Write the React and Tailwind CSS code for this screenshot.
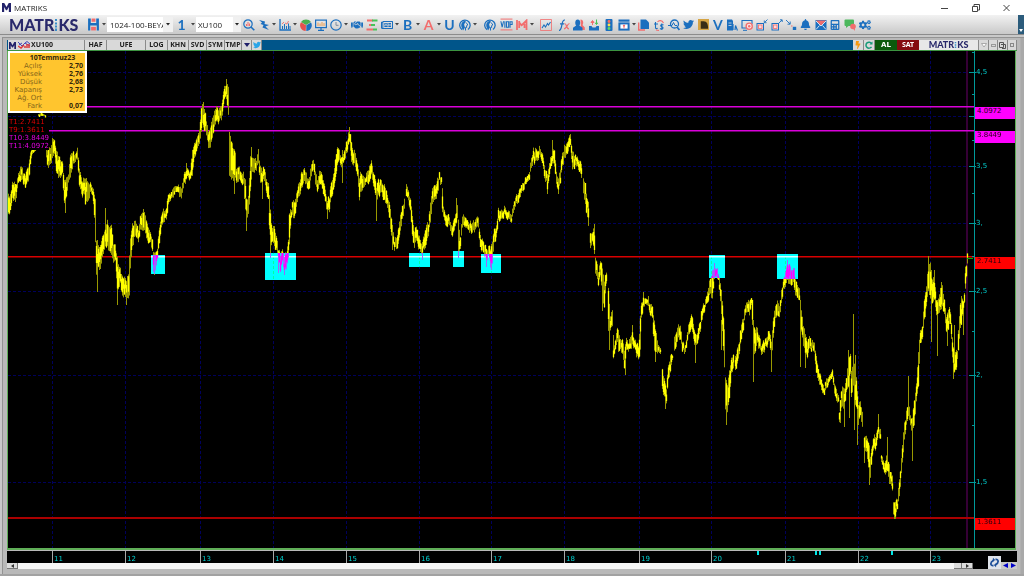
import React from "react";
import {
  FaHandshake, FaTwitter, FaBell, FaCalculator, FaRegNewspaper, FaUser, FaCogs, FaBolt,
} from "react-icons/fa";

const BLUE = "#1b6fbf";
const RED = "#f26d6d";

/* ---------- price data: x, high, low ---------- */
const SEGMENTS = [
  [38, 114, 116, 41, 113, 116, 45, 115, 116],
  [8,196,216,10,194,210,12,184,200,13,182,200,15,186,204,17,178,188,19,170,180,20,165,180,22,168,180,24,174,185,26,172,186,28,168,182,29,160,176,30,152,164,32,149,154,35,148,151],
  [46,148,158,48,148,168,50,150,166,52,140,160,54,138,152,56,150,172,58,155,177,60,160,178,62,160,172,64,182,205,66,178,198,68,172,180,70,155,178,72,152,168,74,154,162,76,150,158,77,148,160,79,170,188,82,180,196,84,180,196,85,178,204,88,184,202,90,180,190,92,188,196,94,193,216,95,197,240,96,240,274,97,253,272,98,246,268,100,244,268,102,235,256,104,230,248,105,224,245,107,220,246,109,226,250,111,226,256,113,244,262,115,246,262,117,256,290,118,265,290,120,270,285,122,274,294,124,278,296,126,280,300,128,276,300,129,255,295,130,240,270,132,225,248,134,222,238,136,222,236,138,228,240,140,218,232,142,214,232,144,212,230,146,220,238,148,228,244,150,230,240,152,240,252,153,250,270,155,254,272,157,248,258,159,228,244,161,214,226,163,208,222,165,212,220,167,200,215,168,196,206,171,192,198,173,186,196,175,186,192,177,186,192,179,186,196,181,188,198,183,176,186,185,170,182,187,168,176,190,172,180,192,150,176,194,145,160,197,138,150,199,128,142,201,110,134,202,106,125,204,108,130,206,120,134,208,132,148,210,130,150,212,118,138,214,112,128,216,107,122,218,108,122,220,108,120,222,100,116,223,90,106,225,84,95,226,82,98,228,86,114],
  [229,132,176,231,140,178,233,148,180,235,155,180,236,168,182,238,165,180,240,172,182,243,174,186,245,180,210,246,200,218,248,196,214,250,155,190,252,160,174,254,158,172,256,160,170,258,152,164,260,165,182,262,170,183,264,168,180,266,178,192,268,184,200,269,196,230,271,222,244,272,226,240,274,225,245,276,238,252,278,248,258,280,254,270,282,250,262,284,255,272,286,252,268,288,242,260,289,215,246,291,208,216,293,200,218,295,200,215,297,188,200,299,182,196,301,174,190,303,168,182,305,170,182,307,176,186,309,178,190,311,164,176,313,158,168,315,172,185,317,180,192,319,170,184,321,172,185,323,180,194,325,192,204,327,200,214,329,196,210,330,184,200,333,176,192,335,160,182,337,148,166,339,150,160,341,158,168,343,155,164,345,147,158,347,140,152,349,129,142,351,140,160,353,152,165,355,152,166,357,165,178,359,176,198,361,172,190,363,174,186,365,178,185,367,172,184,369,164,180,371,162,176,373,172,186,375,180,196,376,186,204,378,180,196,381,182,194,384,184,200,386,192,206,388,198,210,390,208,228,392,224,240,394,240,249,396,238,249,398,228,244,400,216,232,402,205,218,404,200,210],
  [406,184,196,408,190,200,410,198,210,412,216,236,414,232,248,416,226,240,418,236,250,420,240,252,422,244,252,424,232,248,426,226,246,428,222,234,430,205,225,432,188,204,435,186,200,437,180,196,439,174,182,441,177,184],
  [442,186,210,443,208,218,445,215,226,447,214,226,449,218,226,451,226,236,453,222,234,455,214,226,457,205,218,458,220,250,460,236,248,462,215,226,465,218,228,468,224,232,470,222,232,473,222,232,476,220,230,478,218,228,480,236,248,482,240,252,484,244,255,486,250,262,488,246,254,490,248,266,492,240,262,494,230,244,496,224,236,498,210,222,500,210,220,502,212,220,504,208,216,507,210,218,509,212,220,511,214,222,513,204,212,515,196,205,517,195,204,519,188,198,521,184,192,524,180,188,527,176,182,529,172,180,531,156,166,533,150,162,535,150,163,537,150,160,540,147,155,542,154,164,544,165,178,546,172,182,547,174,188,549,162,176,551,155,165,552,150,162,554,152,168,556,170,182,558,180,192,560,168,182,562,155,168,564,145,158,566,145,156,568,140,153,570,135,146,572,152,170,574,155,168,576,156,165,578,160,170,581,162,176],
  [583,179,194,585,184,205,587,200,218,588,202,226],
  [590,235,250,592,233,242,594,226,252],
  [595,256,272,598,270,284,600,260,274,602,268,300,604,280,306,606,274,285],
  [608,290,333,610,318,332,612,310,326],
  [613,350,358,615,342,352,617,328,342,618,328,350,620,340,350,622,340,355,624,350,368,626,340,352,628,344,352,630,338,350,632,330,345,634,340,348,636,342,355,638,345,358,640,318,352,641,305,320,643,298,308,645,298,304,648,300,306,650,302,314,652,306,318,654,320,350,656,335,354,658,345,352,660,348,354],
  [662,368,388,664,380,398,666,388,402,668,366,380,670,357,374,672,355,360],
  [674,336,350,676,330,345,678,322,335,680,328,342,682,340,350,684,348,354,686,342,350,688,325,335,690,318,332,692,315,330,694,330,345,696,335,345,698,330,342,700,320,330,702,306,318,704,304,312,706,296,304,708,286,300,710,280,295,712,272,300,714,268,278,716,270,278,718,274,280,720,282,300,722,300,330,724,330,368,725,378,410,727,385,412,729,370,398,731,360,375,733,352,366],
  [735,354,368,737,350,366,739,340,352,741,325,340,743,318,330,745,305,315,747,302,312,749,300,314,751,298,305,752,300,325],
  [754,328,355,757,330,345,759,335,348,761,345,354,763,340,352,765,340,348,767,335,346,769,330,340,771,342,362,773,320,340,775,306,318,777,300,315,779,305,316,781,292,305,783,280,290,785,270,285,787,264,280,789,266,286,791,270,286,793,268,282,795,278,294,797,285,298,799,290,302],
  [800,303,325,803,325,345,805,335,354,807,340,356,809,338,350,812,342,350,814,345,355,816,355,372,818,368,380,820,375,386,822,385,395,824,388,395,826,380,390,828,376,384,830,374,380,832,370,378,834,382,392,836,388,400,838,395,402],
  [839,410,420,842,385,405,844,390,412,846,378,392,848,358,385,850,355,375,851,370,396,853,360,385,854,366,398,856,378,408,858,405,425,860,402,416,862,410,425],
  [864,436,450,866,436,452,868,440,465,870,455,476,872,444,455,874,436,450,876,435,448,878,426,434,880,428,438],
  [881,455,462,884,465,475,886,455,472,888,460,475,890,470,482,892,475,490,893,500,512,895,500,517,897,500,510,899,478,495,901,460,475,903,430,450,905,418,432,907,408,422,908,398,415,910,415,425,912,420,435,914,400,425,916,382,400,918,350,385,920,332,345,922,325,338,924,300,320,926,285,305,928,264,290,930,262,298,932,282,306,934,275,300,936,300,315,938,300,315,940,290,312,942,287,308,944,300,315,946,315,330,948,310,330,950,310,322,952,335,355,954,355,371,956,350,370,957,350,358],
  [958,330,350,960,305,330,962,298,315,963,302,312],
  [964,292,302],
  [965,266,288,966,264,276],
  [967,254,264],
];

const WICKS = [
  [65,195,213],[97,240,292],[105,208,240],[117,280,305],[126,290,305],[143,209,220],[154,266,275],[186,163,175],[203,102,115],
  [226,79,90],[251,147,165],[246,205,231],[258,149,160],[234,170,194],[262,172,199],[270,230,258],[278,250,273],[284,262,275],[327,205,219],
  [342,150,183],[349,127,132],[376,190,221],[392,225,250],[422,242,260],[439,172,180],[456,198,215],[458,240,258],[486,255,267],[491,250,270],
  [547,174,194],[552,140,155],[558,182,194],[594,224,254],[602,290,311],[609,320,350],[613,335,355],[625,355,375],[632,325,340],
  [643,292,302],[648,296,304],[655,345,362],[665,390,409],[695,335,363],[714,263,275],[717,268,278],[721,320,350],[726,400,425],[753,320,382],[771,345,372],
  [787,260,275],[794,268,290],[800,300,367],[805,345,368],[840,408,423],[844,395,427],[848,350,365],[849,370,418],[853,314,368],[855,355,400],[854,370,430],[857,400,445],
  [864,440,463],[869,460,485],[878,414,430],[887,437,460],[889,470,484],[894,505,519],[908,376,400],[912,420,461],[925,295,317],[928,256,270],[931,270,342],
  [934,270,285],[937,300,356],[941,282,300],[947,325,346],[949,307,320],[954,325,372],[953,350,379],[961,296,306],[963,310,335],
];

function buildPaths() {
  let dim = "";
  let bright = "";
  let seed = 17;
  const rand = () => {
    seed = (seed * 1103515245 + 12345) % 2147483648;
    return seed / 2147483648;
  };
  const column = (x, hi, lo) => {
    const h = lo - hi;
    const jump = h > 7 ? (rand() - 0.5) * 5 : 0;
    const a = hi + jump;
    const b = lo + jump;
    dim += `M${x + 0.5} ${a.toFixed(1)}V${b.toFixed(1)}`;
    const size = h * (0.35 + 0.5 * rand());
    const start = a + (h - size) * rand();
    if (rand() > 0.25) bright += `M${x + 0.5} ${start.toFixed(1)}V${(start + Math.max(size, 2)).toFixed(1)}`;
  };
  SEGMENTS.forEach((s) => {
    for (let i = 0; i < s.length; i += 3) {
      const [x, hi, lo, nx, nhi, nlo] = s.slice(i, i + 6);
      if (nx === undefined) {
        column(x, hi, lo);
      } else {
        for (let k = x; k < nx; k++) {
          const t = (k - x) / (nx - x);
          column(k, hi + (nhi - hi) * t, lo + (nlo - lo) * t);
        }
      }
    }
  });
  WICKS.forEach(([x, a, b]) => {
    dim += `M${x + 0.5} ${a}V${b}`;
  });
  return { dim, bright };
}
const PRICE = buildPaths();

const YEARS = [[52,"11"],[125,"12"],[200,"13"],[273,"14"],[346,"15"],[419,"16"],[491,"17"],[564,"18"],[639,"19"],[711,"20"],[785,"21"],[858,"22"],[930,"23"]];
const LEVELS = [[72,"4,5"],[116,""],[166,"3,5"],[223,"3,"],[291,"2,5"],[375,"2,"],[482,"1,5"]];
const MINOR = [52, 94, 140, 193, 256, 331, 425];
const ZONES = [[151,255,14,19],[265,253,31,27],[409,253,21,14],[453,251,11,16],[481,254,20,19],[709,255,16,23],[777,254,21,25]];
const TAGS = [[107,"4.0972","bg-[#ff00ff]"],[131,"3.8449","bg-[#ff00ff]"],[257,"2.7411","bg-[#ff0000]"],[518,"1.3611","bg-[#ff0000]"]];

const px = (x) => `${((x - 8) / 1007) * 100}%`;
const py = (y) => `${((y - 51) / 497) * 100}%`;
const tx = (x) => `${((x - 7) / 1010) * 100}%`;

/* ---------- icons ---------- */
const Svg = ({ children, size = 12 }) => (
  <svg width={size} height={size} viewBox="0 0 12 12" fill="none" aria-hidden="true">{children}</svg>
);
const Magnify = () => (
  <Svg><circle cx="5" cy="5" r="4.2" stroke={BLUE} strokeWidth="1.2" /><path d="M8 8L11.3 11.3" stroke={BLUE} strokeWidth="1.6" /><path d="M3.5 7V5M5 7V3M6.5 7V4.5" stroke={RED} /></Svg>
);
const MagnifyPulse = () => (
  <Svg><circle cx="6.5" cy="5" r="4" stroke={BLUE} strokeWidth="1.3" /><path d="M9 8L11.5 11" stroke={BLUE} strokeWidth="1.8" /><path d="M0 6.5H4L5.5 3.5L7 6.5H9" stroke={BLUE} /></Svg>
);
const Save = () => (
  <Svg size={13}><path d="M1 0.5H3.5V4.5H8.5V0.5H11V11.5H9V7H3V11.5H1Z" fill={BLUE} /><rect x="4.2" y="0.5" width="3.6" height="3" fill={RED} /><path d="M3.8 8.2H8.2V11.5H3.8Z" fill={RED} /></Svg>
);
const Lightning = () => (<Svg><path d="M1 1L7 2.5L6.5 5L11 6L7.5 7.5L11 11L4.5 8.5L5.5 6L2.5 5L4 3.5Z" fill={BLUE} /></Svg>);
const Bars = () => (
  <Svg><path d="M1 0V11H12" stroke={BLUE} strokeWidth="1.3" /><path d="M3.5 10V7M5.5 10V5M7.5 10V7M9.5 10V4.5M11 10V7" stroke={BLUE} /><path d="M3 5L5 3M6 4L8 5L9.5 2" stroke={RED} strokeWidth="0.9" /></Svg>
);
const Pie = () => (<Svg><path d="M6 6L1 3A6 5.5 0 0 1 11 3Z" fill="#4caf50" /><path d="M6 6.2L1 3.2A5.7 5.7 0 0 0 5.7 12Z" fill="#e5504f" /><path d="M6.3 6.3L11 3.4A5.7 5.7 0 0 1 6.3 12Z" fill={BLUE} /></Svg>);
const Monitor = () => (<Svg><rect x="0.6" y="1.1" width="10.8" height="7.5" stroke={BLUE} strokeWidth="1.2" /><path d="M3 7V3.5M5 7V4.5M7 7V3M9 7V4" stroke="#f0a050" /><path d="M6 9V11M3 11.3H9" stroke={BLUE} strokeWidth="1.2" /></Svg>);
const Clock = () => (<Svg><circle cx="6" cy="6" r="5.2" stroke={BLUE} strokeWidth="1.2" /><path d="M6 3V6.3H8.5" stroke="#7a8ba0" /></Svg>);
const Depth = () => (<Svg><path d="M1 1.5H7M3 6H7M0.5 10.5H7" stroke={RED} strokeWidth="2.2" /><path d="M6 1.5H11.5M5 6H9M7 10.5H11" stroke="#48c258" strokeWidth="2.2" /></Svg>);
const Head = () => (<Svg><path d="M3 10.6A5.2 5.2 0 1 1 9 10.5" stroke={BLUE} strokeWidth="1.3" /><path d="M2.5 8C1.5 4 4 1.5 6.5 2C7.5 3.5 5 4 5.2 6L6 8.5L4 11.5Z" fill={BLUE} /><path d="M7.2 3.5L8.8 6L7.6 6.6V8.5H6.5V11.5" stroke={BLUE} strokeWidth="1" /></Svg>);
const Viop = () => (<Svg size={13}><path d="M0.5 1H11.5M0.5 11H11.5" stroke={RED} strokeWidth="0.9" /><path d="M0.8 3L2 8.5L3.3 3M4.5 3V9M6 3.4H8V8.6H6ZM9.3 9V3.4H11.2V6H9.5" stroke={BLUE} strokeWidth="1" /></Svg>);
const MChart = () => (<Svg><path d="M1 1V11M3.2 2V9M6 6L10.5 1.5V11M8.5 5V9M3 3L6 7" stroke={RED} strokeWidth="1.8" /></Svg>);
const Graph = () => (<Svg><rect x="0.6" y="0.6" width="10.8" height="10.8" stroke={RED} strokeWidth="0.8" /><path d="M2 9L4 6L5.5 8L7.5 4.5L8.5 6L10.5 3" stroke={BLUE} strokeWidth="1.1" /></Svg>);
const Fx = () => (<Svg><path d="M1 11.5C3 11.5 3.2 9 4 5.5C4.5 2 5 0.8 7 1M2 4.8H6.2" stroke={BLUE} strokeWidth="1.2" /><path d="M6.5 4.5C9 4.5 8 10 11 9.8M11.5 4.5C9.5 4.5 8.5 9.8 6 9.8" stroke={RED} strokeWidth="1.2" /></Svg>);
const People = () => (<Svg><path d="M7.5 0.5C11 0.5 10.5 5 9.5 6L11.8 8.5V11H8Z" fill={RED} /><path d="M4.7 0.5C8 0.5 7.5 5.5 6.3 6.5L9.5 8.8V11.5H0V8.8L3.2 6.5C2 5.5 1.5 0.5 4.7 0.5Z" fill={BLUE} /></Svg>);
const Inbox = () => (<Svg><path d="M1 7H3.5L4.5 8.5H7.5L8.5 7H11V11.5H1Z" fill={BLUE} /><path d="M4.5 6V2.5M3 3.5L4.5 1.5L6 3.5Z" stroke={RED} fill={RED} /><path d="M8.5 0.5V4M7.5 4L8.5 5.5L9.5 4Z" stroke="#48c258" fill="#48c258" /></Svg>);
const Traffic = () => (<Svg><rect x="2.5" y="0" width="7" height="12" rx="1" fill={BLUE} /><circle cx="6" cy="2.5" r="1.4" fill="#ff6b5e" /><circle cx="6" cy="6" r="1.4" fill="#ffe14a" /><circle cx="6" cy="9.5" r="1.4" fill="#5fdc60" /></Svg>);
const Upload = () => (<Svg><rect x="0.5" y="0.5" width="11" height="2.2" fill={BLUE} /><rect x="1.4" y="4.4" width="9.2" height="6.2" stroke={BLUE} strokeWidth="2" fill="#fff" /><path d="M6 9.5V6.5M5 7L6 5.8L7 7Z" stroke={RED} fill={RED} /></Svg>);
const Copy = () => (<Svg><path d="M0.7 3.5V11H7" stroke={RED} strokeWidth="1.3" /><path d="M2.5 0.5H8L11 3.5V10H2.5Z" fill={BLUE} /></Svg>);
const Money = () => (<Svg><path d="M2.5 3V8.5C2.5 10 4 9.8 4.5 9M1 5H5M10.5 6C8 4.5 6.5 7 9 7.8C11.5 8.5 9 11 7 9.5M8.8 4.5V11" stroke={BLUE} strokeWidth="1.1" /><path d="M4.5 3C6 1 9 1 10.5 4M3 11L6 11.5" stroke={RED} strokeWidth="1.1" /></Svg>);
const DBox = () => (<Svg size={11}><rect x="0" y="0" width="12" height="12" fill="#d5a444" /><path d="M3 2.5H6C10 2.5 11 6 11 10.5H3Z" fill="#382c16" /></Svg>);
const DocChart = () => (<Svg><path d="M1 0.5H6L7 2V11.5H1Z" fill={BLUE} /><path d="M7 11V5M9 11L9.5 6.5L11.5 11.5" stroke={BLUE} strokeWidth="1.2" /><path d="M2.5 4H5.5M2.5 6.5H5.5" stroke="#ddd" strokeWidth="0.8" /></Svg>);
const Screen = () => (<Svg><path d="M6 9H1V1.5H11V5" stroke={BLUE} strokeWidth="1.1" /><path d="M2 11.3H6" stroke={BLUE} /><circle cx="8.2" cy="7.2" r="3.1" fill="#fbe3e3" stroke={RED} strokeWidth="1.3" /><circle cx="8.2" cy="7.2" r="1.2" fill={RED} /></Svg>);
const Shrink = () => (<Svg><rect x="1" y="4.5" width="6.5" height="6.5" stroke={BLUE} strokeWidth="1" fill="#fbdcdc" /><rect x="2.5" y="6" width="3.5" height="3.5" stroke={RED} strokeWidth="0.8" /><path d="M11.5 0.5L8.5 3.5M8.3 1.5V3.7H10.5" stroke={BLUE} strokeWidth="0.9" /></Svg>);
const Grow = () => (<Svg><rect x="1" y="4.5" width="6.5" height="6.5" stroke={BLUE} strokeWidth="1" fill="#fbdcdc" /><rect x="2.5" y="6" width="3.5" height="3.5" stroke={RED} strokeWidth="0.8" /><path d="M8 4L11 1M9 0.8H11.2V3" stroke={BLUE} strokeWidth="0.9" /></Svg>);
const Dots = () => (<Svg><path d="M1 1L5 5M5.2 2.5V5.2H2.5" stroke={BLUE} strokeWidth="0.9" /><path d="M7.8 7.8H11.2V11H7.8Z" fill={BLUE} /><path d="M6 7H7.5" stroke={RED} /></Svg>);
const Mail = () => (<Svg><path d="M0.5 1H11.5V11H0.5Z" fill={BLUE} /><path d="M1 1.5H11L6 6.5Z" fill={RED} /><path d="M1 10.5L4.5 6.5M11 10.5L7.5 6.5M1 2L6 7L11 2" stroke="#e8eef5" strokeWidth="0.9" /></Svg>);
const Chat = () => (<Svg><rect x="0.5" y="0.5" width="9.5" height="6.5" rx="1" fill="#4db85c" /><path d="M2 7V9L4.5 7Z" fill="#4db85c" /><circle cx="9" cy="7.5" r="2.8" fill={RED} /><path d="M9 9.5L11 12L10.8 9Z" fill={RED} /></Svg>);
const Letter = ({ c, red }) => (
  <span className={`font-['Lato',sans-serif] text-[14px] leading-[14px] font-bold ${red ? "text-[#f26d6d]" : "text-[#1b6fbf]"}`}>{c}</span>
);

const Tool = ({ label, children }) => (
  <button aria-label={label} className="flex h-[15px] w-[15px] shrink-0 items-center justify-center">{children}</button>
);
const Caret = () => (
  <button aria-label="Menu" className="flex h-[15px] w-[6px] shrink-0 items-center justify-center">
    <svg width="4" height="3" viewBox="0 0 4 3" aria-hidden="true"><path d="M0 0H4L2 2.5Z" fill="#444" /></svg>
  </button>
);

const RIGHT_TOOLS = [
  ["Copy", <Copy />], ["Currency", <Money />], ["Search", <MagnifyPulse />], ["Twitter", <FaTwitter size={11} color={BLUE} />],
  ["Data", <DBox />], ["V", <Letter c="V" />], ["Report", <DocChart />], ["Screen", <Screen />], ["Shrink", <Shrink />],
  ["Grow", <Grow />], ["Arrange", <Dots />], ["Alarm", <FaBell size={11} color={BLUE} />], ["Mail", <Mail />],
  ["Calculator", <FaCalculator size={10} color={BLUE} />], ["Chat", <Chat />], ["Settings", <FaCogs size={12} color={BLUE} />],
];

const Logo = ({ small }) => (
  <span className={`flex items-center font-['Lato',sans-serif] font-black text-[#29296b] ${small ? "text-[9px] leading-[10px]" : "text-[16px] leading-[18px]"}`}>
    MATR
    <svg className={small ? "h-[6px] w-[3px]" : "h-[12px] w-[4px]"} viewBox="0 0 4 12" preserveAspectRatio="none" aria-hidden="true">
      <path d="M1 0H3V2H1ZM1 3.5H3V5.5H1ZM1 6.5H3V8.5H1ZM1 9.5H3V12H1Z" fill="#3a8ec8" />
    </svg>
    KS
  </span>
);
const MMark = ({ className }) => (
  <svg className={className} viewBox="0 0 10 10" aria-hidden="true"><path d="M0 10V0H2.5L5 4.5L7.5 0H10V10H7.6V4.5L5.6 8H4.4L2.4 4.5V10Z" fill="#23236b" /></svg>
);

const Tab = ({ w, children }) => (
  <button className={`flex h-full shrink-0 items-center justify-center border-r border-[#8a8a8a] bg-[#d9d9d9] font-['Noto_Sans',sans-serif] text-[7px] leading-[8px] font-bold text-[#222] ${w}`}>{children}</button>
);

const INFO = [["Açılış","2,70"],["Yüksek","2,76"],["Düşük","2,68"],["Kapanış","2,73"],["Ağ. Ort",""],["Fark","0,07"]];

function Plot() {
  return (
    <div className="relative min-h-0 flex-1 overflow-hidden border-r border-b-2 border-l border-[#5fae57] bg-black">
      <svg className="absolute inset-0 h-full w-full" viewBox="8 51 1007 497" preserveAspectRatio="none" role="img" aria-label="XU100">
        <g stroke="#00005c" strokeWidth="1" strokeDasharray="3 2">
          {YEARS.map(([x]) => <path key={x} d={`M${x + 0.5} 51V548`} />)}
          {LEVELS.map(([y]) => <path key={y} d={`M8 ${y + 0.5}H968`} />)}
        </g>
        <path d="M967 51V548" stroke="#350035" strokeWidth="2" />
        <path d="M8 106.7H974M8 130.7H974" stroke="#d800d8" strokeWidth="1.5" />
        <path d="M8 256.7H974" stroke="#d80000" strokeWidth="1.5" />
        <path d="M8 518H974" stroke="#aa0000" strokeWidth="2" />
        <path d={PRICE.dim} stroke="#999900" strokeWidth="1" />
        <path d={PRICE.bright} stroke="#ffff00" strokeWidth="1.3" />
        <path d="M967 258.5H973" stroke="#00b000" />
        <g className="mix-blend-difference" fill="#00ffff">
          {ZONES.map(([x, y, w, h]) => <rect key={x} x={x} y={y} width={w} height={h} />)}
        </g>
        <path d="M974.5 51V548" stroke="#009a9a" strokeWidth="1" />
        {LEVELS.map(([y]) => <path key={y} d={`M969 ${y + 0.5}H976`} stroke="#009a9a" />)}
        {MINOR.map((y) => <path key={y} d={`M972 ${y + 0.5}H974`} stroke="#009a9a" />)}
      </svg>
      {LEVELS.map(([y, t]) => (
        <span key={y} className="absolute -translate-y-1/2 text-[7px] leading-[8px] text-[#00d0d0]" style={{ left: px(976), top: py(y) }}>{t}</span>
      ))}
      {TAGS.map(([y, t, bg]) => (
        <span key={y} className={`absolute right-0 h-[12px] pl-[2px] text-[7px] leading-[8px] text-[#200010] ${bg}`} style={{ left: px(975), top: py(y) }}>{t}</span>
      ))}
      <div className="absolute top-0 left-0 w-[79px] border-2 border-white bg-[#ffc52e] px-[2px] pb-[1px] text-[7px] leading-[8px]">
        <table className="w-full border-collapse">
          <caption className="pt-[1px] pl-[10px] text-center font-['Noto_Sans',sans-serif] font-bold text-[#33260a]">10Temmuz23</caption>
          <tbody>
            {INFO.map(([k, v]) => (
              <tr key={k} className="h-[8px]">
                <th scope="row" className="w-[30px] p-0 text-right font-normal whitespace-nowrap text-[#86661a]">{k}</th>
                <td className="p-0 text-right font-['Noto_Sans',sans-serif] font-bold text-[#33260a]">{v}</td>
              </tr>
            ))}
          </tbody>
        </table>
      </div>
      <div className="absolute left-0 flex flex-col bg-black pl-[1px] text-[7px] leading-[8px]" style={{ top: py(118) }}>
        <span className="text-[#e00000]">T1:2.7411</span>
        <span className="text-[#e00000]">T9:1.3611</span>
        <span className="text-[#e400e4]">T10:3.8449</span>
        <span className="text-[#e400e4]">T11:4.0972</span>
      </div>
    </div>
  );
}

export default function App() {
  return (
    <div className="flex h-screen flex-col overflow-hidden bg-[#b9b9b9] font-['DejaVu_Sans',sans-serif] text-black">
      <header className="flex h-[15px] shrink-0 items-center bg-white pl-[2px] font-['Open_Sans',sans-serif] text-[8px] leading-[12px] text-[#222]">
        <MMark className="h-[9px] w-[9px]" />
        <h1 className="flex-1 pl-[3px]">MATRIKS</h1>
        <div className="flex gap-[18px] pr-[11px]">
          <button aria-label="Minimize"><svg width="13" height="10" viewBox="0 0 13 10" fill="none" stroke="#444"><path d="M3 5.5H10" /></svg></button>
          <button aria-label="Restore"><svg width="13" height="10" viewBox="0 0 13 10" fill="none" stroke="#444"><path d="M3.5 3.5H8.5V8.5H3.5ZM5 3.5V1.5H10.5V7H8.5" /></svg></button>
          <button aria-label="Close"><svg width="13" height="10" viewBox="0 0 13 10" fill="none" stroke="#444"><path d="M3.5 2L9.5 8M9.5 2L3.5 8" /></svg></button>
        </div>
      </header>

      <nav className="flex h-[20px] shrink-0 items-center border-b border-[#8c8c8c] bg-gradient-to-b from-[#f2f2f2] to-[#c9c9c9]">
        <div className="flex w-[86px] shrink-0 pl-[9px]"><Logo /></div>
        <Tool label="Save"><Save /></Tool>
        <Caret />
        <div className="relative flex w-[66px] shrink-0">
          <select aria-label="Template" className="h-[15px] w-full appearance-none bg-white pl-[3px] font-['Open_Sans',sans-serif] text-[8px] leading-[15px] text-[#222]">
            <option>1024-100-BEYAZ</option>
          </select>
          <span className="pointer-events-none absolute top-0 right-0 flex h-full w-[10px] items-center justify-center bg-[#f0f0f0]"><svg width="4" height="3" viewBox="0 0 4 3" aria-hidden="true"><path d="M0 0H4L2 2.5Z" fill="#222" /></svg></span>
        </div>
        <div className="flex shrink-0 px-[1px]"><Tool label="Layout 1"><Letter c="1" /></Tool></div>
        <Caret />
        <div className="relative flex w-[45px] shrink-0">
          <select aria-label="Symbol" className="h-[15px] w-full appearance-none bg-white pl-[2px] font-['Open_Sans',sans-serif] text-[8px] leading-[15px] text-[#222]">
            <option>XU100</option>
          </select>
          <span className="pointer-events-none absolute top-0 right-0 flex h-full w-[8px] items-center justify-center bg-[#f0f0f0]"><svg width="4" height="3" viewBox="0 0 4 3" aria-hidden="true"><path d="M0 0H4L2 2.5Z" fill="#222" /></svg></span>
        </div>
        <Tool label="Inspect"><Magnify /></Tool>
        <Tool label="Quick"><Lightning /></Tool><Caret />
        <Tool label="Chart"><Bars /></Tool><Caret />
        <Tool label="Pie"><Pie /></Tool>
        <Tool label="Monitor"><Monitor /></Tool>
        <Tool label="Time"><Clock /></Tool><Caret />
        <Tool label="Agreement"><FaHandshake size={12} color={BLUE} /></Tool>
        <Tool label="Depth"><Depth /></Tool>
        <Tool label="News"><FaRegNewspaper size={12} color={BLUE} /></Tool><Caret />
        <Tool label="B"><Letter c="B" /></Tool><Caret />
        <Tool label="A"><Letter c="A" red /></Tool><Caret />
        <Tool label="U"><Letter c="U" /></Tool>
        <Tool label="Advisor"><Head /></Tool><Caret />
        <div className="flex shrink-0 gap-[2px] pl-[4px]">
          <Tool label="Analyst"><Head /></Tool>
          <Tool label="VIOP"><Viop /></Tool>
        </div>
        <Tool label="Matriks chart"><MChart /></Tool><Caret />
        <div className="flex shrink-0 gap-[3px] pl-[3px]">
          <Tool label="Graph"><Graph /></Tool>
          <Tool label="Function"><Fx /></Tool>
        </div>
        <Tool label="Users"><People /></Tool>
        <Tool label="Transfer"><Inbox /></Tool>
        <Tool label="Signals"><Traffic /></Tool>
        <Tool label="Upload"><Upload /></Tool><Caret />
        <div className="flex w-[235px] shrink-0">
          {RIGHT_TOOLS.map(([label, icon]) => (
            <button key={label} aria-label={label} className="flex h-[15px] min-w-0 flex-1 items-center justify-center">{icon}</button>
          ))}
        </div>
        <button aria-label="More" className="ml-auto flex h-full w-[6px] items-end justify-center bg-[#2c5c7c] pb-[2px]">
          <svg width="4" height="3" viewBox="0 0 4 3" aria-hidden="true"><path d="M0 0H4L2 3Z" fill="#fff" /></svg>
        </button>
      </nav>

      <main className="flex min-h-0 flex-1 flex-col border-b-2 border-[#a2a2a2] px-[7px] pt-[5px] pb-[5px] shadow-[inset_2px_2px_0_#c9c9c9,inset_3px_3px_0_#939393,inset_-3px_0_0_#a9a9a9,inset_-4px_0_0_#b0b0b0]">
        <div className="flex h-[10px] shrink-0 bg-[#00558a] pl-[1px]">
          <div className="flex w-[77px] shrink-0 items-center border-r border-[#8a8a8a] bg-[#d9d9d9] font-['Noto_Sans',sans-serif] text-[7px] leading-[8px] font-bold text-[#222]">
            <MMark className="mr-[2px] ml-[1px] h-[7px] w-[7px]" />
            <svg width="12" height="8" viewBox="0 0 12 8" fill="none" aria-hidden="true">
              <path d="M0 1L4 5L7 2L12 5M1 4L4 2M7 2L9 0.5L12 3" stroke="#4545b8" /><path d="M0 5L3 7L6 4M6 6H12M8 4H12" stroke="#e03838" strokeWidth="1.4" />
            </svg>
            <span className="pl-[1px]">XU100</span>
          </div>
          <Tab w="w-[22px]">HAF</Tab>
          <Tab w="w-[39px]">UFE</Tab>
          <Tab w="w-[22px]">LOG</Tab>
          <Tab w="w-[21px]">KHN</Tab>
          <Tab w="w-[18px]">SVD</Tab>
          <Tab w="w-[18px]">SYM</Tab>
          <Tab w="w-[17px]">TMP</Tab>
          <Tab w="w-[10px]"><svg width="6" height="4" viewBox="0 0 6 4" aria-label="More"><path d="M0 0H6L3 4Z" fill="#20206a" /></svg></Tab>
          <Tab w="w-[10px]"><FaTwitter size={8} color="#2aa5e8" aria-label="Twitter" /></Tab>
          <div className="ml-auto flex">
            <Tab w="w-[11px]"><FaBolt size={8} color="#f59a10" aria-label="Bolt" /></Tab>
            <Tab w="w-[11px]"><svg width="8" height="8" viewBox="0 0 8 8" fill="none" aria-label="Refresh"><path d="M6.5 2.5A3 3 0 1 0 6.5 5.8" stroke="#159a78" strokeWidth="1.5" /><path d="M7.5 0.5V3.5H4.5Z" fill="#159a78" /></svg></Tab>
            <button className="w-[22px] bg-[#0c5a0c] text-[7px] leading-[10px] font-bold text-white">AL</button>
            <button className="w-[22px] bg-[#850c10] font-['Noto_Sans',sans-serif] text-[7px] leading-[10px] font-bold text-white">SAT</button>
            <div className="flex w-[60px] items-center justify-center border-r border-[#8a8a8a] bg-[#e8e8e8]"><Logo small /></div>
            <Tab w="w-[10px]"><svg width="6" height="5" viewBox="0 0 6 5" fill="#fff" stroke="#999" strokeWidth="0.8" aria-label="Collapse"><path d="M0.5 0.5H5.5L3 4Z" /></svg></Tab>
            <Tab w="w-[9px]"><svg width="5" height="5" viewBox="0 0 5 5" fill="none" stroke="#999" aria-label="Minimize"><rect x="0.5" y="1.5" width="4" height="2" /></svg></Tab>
            <Tab w="w-[10px]"><svg width="7" height="7" viewBox="0 0 7 7" fill="none" stroke="#555" aria-label="Window"><path d="M0.5 0.5H4.5V5.5H0.5ZM2 2.5H4M5 2.5H6.5V6.5H3" /></svg></Tab>
            <Tab w="w-[9px]"><svg width="5" height="5" viewBox="0 0 5 5" fill="none" stroke="#888" aria-label="Close"><rect x="0.5" y="0.5" width="3" height="3" /></svg></Tab>
          </div>
        </div>

        <div className="flex min-h-0 flex-1 flex-col border-t border-[#3c9440] pr-[1px]">
          <Plot />
        </div>

        <div className="mt-[1px] flex h-[18px] shrink-0 flex-col bg-black">
          <div className="relative h-[12px]">
            {YEARS.map(([x, t]) => (
              <span key={t} className="absolute top-0 flex h-full items-end border-l border-[#a8a8a8] pl-[1px] text-[7px] leading-[8px] text-[#00d0d0]" style={{ left: tx(x) }}>{t}</span>
            ))}
            {[757, 815, 819, 891].map((x) => (
              <span key={x} className="absolute top-0 h-[4px] w-[2px] bg-[#00e6e6]" style={{ left: tx(x) }} />
            ))}
          </div>
          <div className="relative flex h-[6px] items-stretch pr-[44px]">
            <button aria-label="Scroll left" className="flex w-[11px] items-center justify-center border-r border-b border-[#777] bg-[#dcdcdc]"><svg width="3" height="4" viewBox="0 0 3 4"><path d="M3 0V4L0 2Z" fill="#333" /></svg></button>
            <div className="flex-1 bg-[#f6f6f6]" />
            <div className="w-[8px] border-r border-b border-[#777] bg-[#dcdcdc]" />
            <button aria-label="Scroll right" className="flex w-[11px] items-center justify-center border-r border-b border-[#777] bg-[#dcdcdc]"><svg width="3" height="4" viewBox="0 0 3 4"><path d="M0 0V4L3 2Z" fill="#333" /></svg></button>
            <div className="absolute right-0 bottom-0 flex items-end bg-black">
              <button aria-label="Refresh" className="flex h-[13px] w-[13px] items-center justify-center bg-[#dfe3ea]">
                <svg width="11" height="11" viewBox="0 0 11 11" fill="none"><path d="M4.5 8.5C1 9 1 5 4.5 3.2M6.5 2.5C10 2 10 6 6.5 7.8" stroke="#1d4f9a" strokeWidth="1.8" /><path d="M4 0.8L6.2 3L3.5 5ZM7 10.2L4.8 8L7.5 6Z" fill="#1d4f9a" /></svg>
              </button>
              <button aria-label="Previous" className="flex h-[7px] w-[8px] items-center justify-center bg-[#c9c9c9]"><svg width="5" height="5" viewBox="0 0 5 5"><path d="M5 0V5L0 2.5Z" fill="#0000c8" /></svg></button>
              <button aria-label="Next" className="flex h-[7px] w-[8px] items-center justify-center bg-[#c9c9c9]"><svg width="5" height="5" viewBox="0 0 5 5"><path d="M0 0V5L5 2.5Z" fill="#0000c8" /></svg></button>
            </div>
          </div>
        </div>
      </main>
    </div>
  );
}
